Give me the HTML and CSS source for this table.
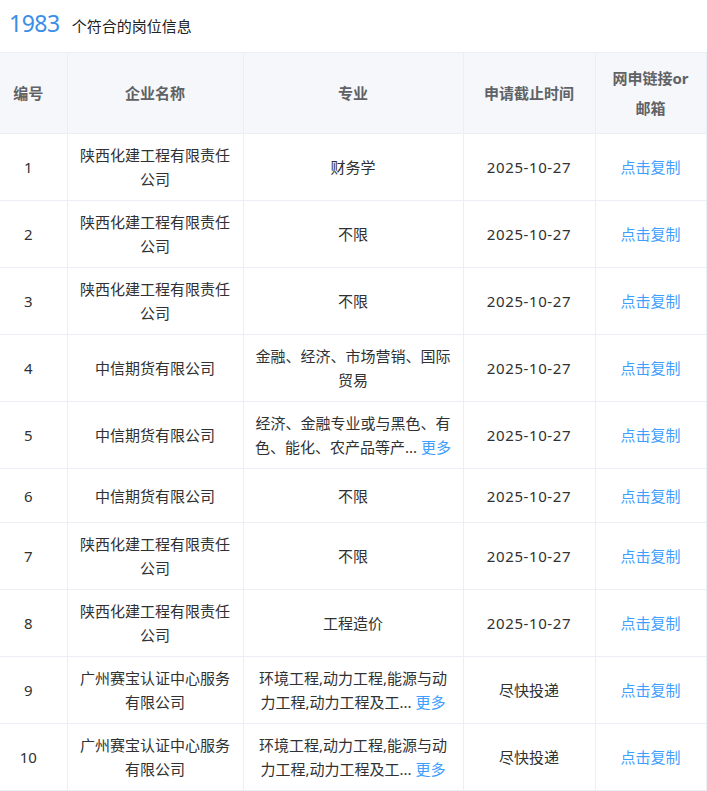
FILE: index.html
```html
<!DOCTYPE html>
<html lang="zh-CN">
<head>
<meta charset="utf-8">
<title>岗位信息</title>
<link rel="stylesheet" href="styles.css">
</head>
<body>
<div class="summary">
  <span class="count">1983</span>
  <span class="summary-text">个符合的岗位信息</span>
</div>
<table class="jobs">
  <colgroup>
    <col class="c-no"><col class="c-co"><col class="c-major"><col class="c-date"><col class="c-link">
  </colgroup>
  <thead>
    <tr>
      <th class="no">编号</th>
      <th>企业名称</th>
      <th>专业</th>
      <th>申请截止时间</th>
      <th>网申链接or邮箱</th>
    </tr>
  </thead>
  <tbody>
    <tr><td class="no">1</td><td>陕西化建工程有限责任公司</td><td>财务学</td><td class="date">2025-10-27</td><td><a class="link">点击复制</a></td></tr>
    <tr><td class="no">2</td><td>陕西化建工程有限责任公司</td><td>不限</td><td class="date">2025-10-27</td><td><a class="link">点击复制</a></td></tr>
    <tr><td class="no">3</td><td>陕西化建工程有限责任公司</td><td>不限</td><td class="date">2025-10-27</td><td><a class="link">点击复制</a></td></tr>
    <tr><td class="no">4</td><td>中信期货有限公司</td><td>金融、经济、市场营销、国际贸易</td><td class="date">2025-10-27</td><td><a class="link">点击复制</a></td></tr>
    <tr><td class="no">5</td><td>中信期货有限公司</td><td>经济、金融专业或与黑色、有色、能化、农产品等产... <a class="link">更多</a></td><td class="date">2025-10-27</td><td><a class="link">点击复制</a></td></tr>
    <tr><td class="no">6</td><td>中信期货有限公司</td><td>不限</td><td class="date">2025-10-27</td><td><a class="link">点击复制</a></td></tr>
    <tr><td class="no">7</td><td>陕西化建工程有限责任公司</td><td>不限</td><td class="date">2025-10-27</td><td><a class="link">点击复制</a></td></tr>
    <tr><td class="no">8</td><td>陕西化建工程有限责任公司</td><td>工程造价</td><td class="date">2025-10-27</td><td><a class="link">点击复制</a></td></tr>
    <tr><td class="no">9</td><td>广州赛宝认证中心服务有限公司</td><td>环境工程,动力工程,能源与动力工程,动力工程及工... <a class="link">更多</a></td><td>尽快投递</td><td><a class="link">点击复制</a></td></tr>
    <tr><td class="no">10</td><td>广州赛宝认证中心服务有限公司</td><td>环境工程,动力工程,能源与动力工程,动力工程及工... <a class="link">更多</a></td><td>尽快投递</td><td><a class="link">点击复制</a></td></tr>
  </tbody>
</table>
</body>
</html>
```
FILE: styles.css
```css
* { box-sizing: border-box; }
html, body { margin: 0; padding: 0; background: #fff; }
body {
  font-family: "Noto Sans", "Noto Sans CJK SC", sans-serif;
  font-size: 15px;
  color: #303133;
}
.summary {
  height: 52px;
  padding: 7px 9px 0;
  display: flex;
  align-items: baseline;
  line-height: 32px;
}
.count {
  font-size: 23px;
  letter-spacing: -0.5px;
  color: #3a8ee9;
}
.summary-text {
  margin-left: 12px;
  font-size: 15px;
  color: #222;
}
.jobs {
  width: 706px;
  table-layout: fixed;
  border-collapse: collapse;
}
.c-no { width: 67px; }
.c-co { width: 176px; }
.c-major { width: 220px; }
.c-date { width: 132px; }
.c-link { width: 111px; }
.jobs th, .jobs td {
  border: 1px solid #ebeef5;
  text-align: center;
  padding: 9px 10px;
}
.jobs th:first-child, .jobs td:first-child { border-left: none; }
.jobs th {
  background: #f5f7fa;
  color: #606266;
  font-weight: 700;
  line-height: 30px;
  padding: 10px 10px;
}
.jobs td {
  line-height: 24px;
  height: 54px;
}
.jobs .no { padding-left: 0; padding-right: 10px; }
.jobs .date { letter-spacing: 0.6px; }
.link { color: #409eff; cursor: pointer; }
```
